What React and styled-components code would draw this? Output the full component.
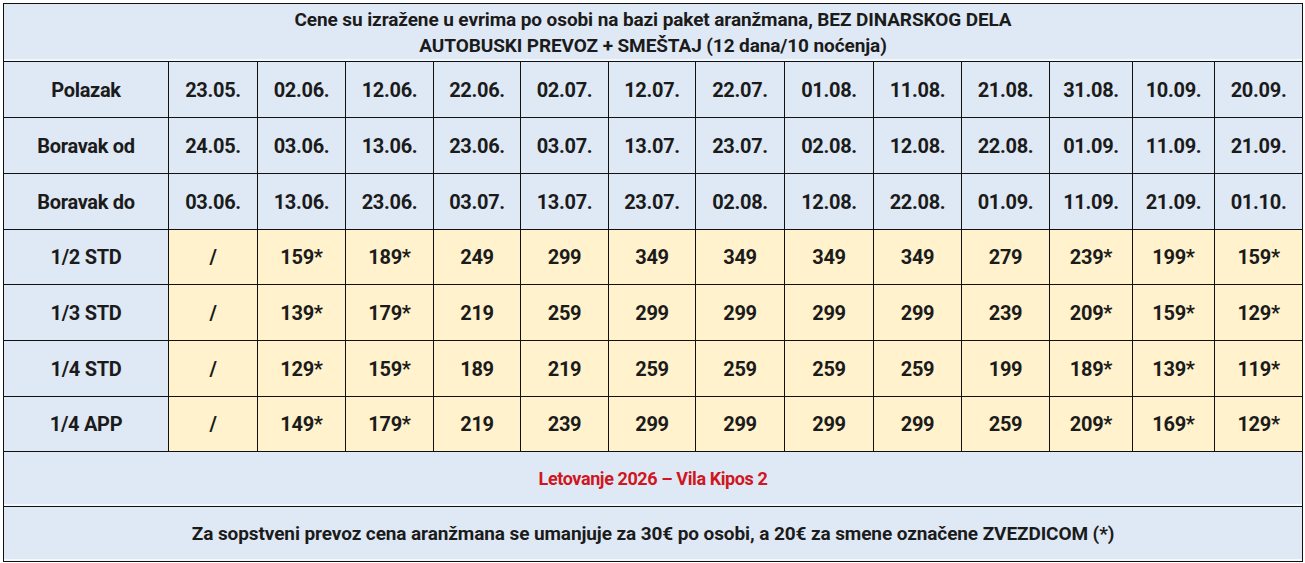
import styled, { createGlobalStyle } from 'styled-components';

const GlobalStyle = createGlobalStyle`
  body {
    margin: 0;
    background: #ffffff;
    font-family: Roboto, "Liberation Sans", sans-serif;
  }
`;

const Wrap = styled.div`
  padding: 3px 3px 2px 3px;
`;

const Table = styled.table`
  width: 1299px;
  table-layout: fixed;
  border-collapse: collapse;
  border: 1px solid #111;
  color: #1b1b1b;
`;

const Row = styled.tr`
  height: ${(p) => p.$h}px;
`;

const Cell = styled.td`
  border: 1px solid #111;
  padding: 0;
  text-align: center;
  vertical-align: middle;
  font-weight: 700;
  font-size: 20px;
  letter-spacing: -0.3px;
  background: ${(p) => (p.$price ? '#fff2cc' : '#dfe9f5')};
`;

const WideCell = styled.td`
  border: 1px solid #111;
  padding: 0;
  text-align: center;
  vertical-align: middle;
  font-weight: 700;
  font-size: ${(p) => (p.$red ? 18 : 19)}px;
  line-height: 26px;
  letter-spacing: ${(p) => (p.$red ? -0.4 : -0.1)}px;
  background: #dfe9f5;
  box-shadow: inset 0 -2px 0 #f4f8fc;
  color: ${(p) => (p.$red ? '#d0161e' : '#1b1b1b')};
`;

const widths = [165, 89, 88, 88, 87, 88, 87, 89, 89, 88, 88, 83, 82, 88];

const dateRows = [
  ['Polazak', ['23.05.', '02.06.', '12.06.', '22.06.', '02.07.', '12.07.', '22.07.', '01.08.', '11.08.', '21.08.', '31.08.', '10.09.', '20.09.']],
  ['Boravak od', ['24.05.', '03.06.', '13.06.', '23.06.', '03.07.', '13.07.', '23.07.', '02.08.', '12.08.', '22.08.', '01.09.', '11.09.', '21.09.']],
  ['Boravak do', ['03.06.', '13.06.', '23.06.', '03.07.', '13.07.', '23.07.', '02.08.', '12.08.', '22.08.', '01.09.', '11.09.', '21.09.', '01.10.']],
];

const priceRows = [
  ['1/2 STD', ['/', '159*', '189*', '249', '299', '349', '349', '349', '349', '279', '239*', '199*', '159*']],
  ['1/3 STD', ['/', '139*', '179*', '219', '259', '299', '299', '299', '299', '239', '209*', '159*', '129*']],
  ['1/4 STD', ['/', '129*', '159*', '189', '219', '259', '259', '259', '259', '199', '189*', '139*', '119*']],
  ['1/4 APP', ['/', '149*', '179*', '219', '239', '299', '299', '299', '299', '259', '209*', '169*', '129*']],
];

export default function App() {
  return (
    <Wrap>
      <GlobalStyle />
      <Table>
        <colgroup>
          {widths.map((w, i) => (
            <col key={i} style={{ width: w }} />
          ))}
        </colgroup>
        <tbody>
          <Row $h={58}>
            <WideCell colSpan={14}>
              Cene su izražene u evrima po osobi na bazi paket aranžmana, BEZ DINARSKOG DELA
              <br />
              AUTOBUSKI PREVOZ + SMEŠTAJ (12 dana/10 noćenja)
            </WideCell>
          </Row>
          {dateRows.map(([label, vals]) => (
            <Row $h={56} key={label}>
              <Cell>{label}</Cell>
              {vals.map((v, i) => (
                <Cell key={i}>{v}</Cell>
              ))}
            </Row>
          ))}
          {priceRows.map(([label, vals], r) => (
            <Row $h={r === 0 || r === 3 ? 55 : 56} key={label}>
              <Cell>{label}</Cell>
              {vals.map((v, i) => (
                <Cell $price key={i}>{v}</Cell>
              ))}
            </Row>
          ))}
          <Row $h={55}>
            <WideCell $red colSpan={14}>Letovanje 2026 – Vila Kipos 2</WideCell>
          </Row>
          <Row $h={55}>
            <WideCell colSpan={14}>
              Za sopstveni prevoz cena aranžmana se umanjuje za 30€ po osobi, a 20€ za smene označene ZVEZDICOM (*)
            </WideCell>
          </Row>
        </tbody>
      </Table>
    </Wrap>
  );
}
